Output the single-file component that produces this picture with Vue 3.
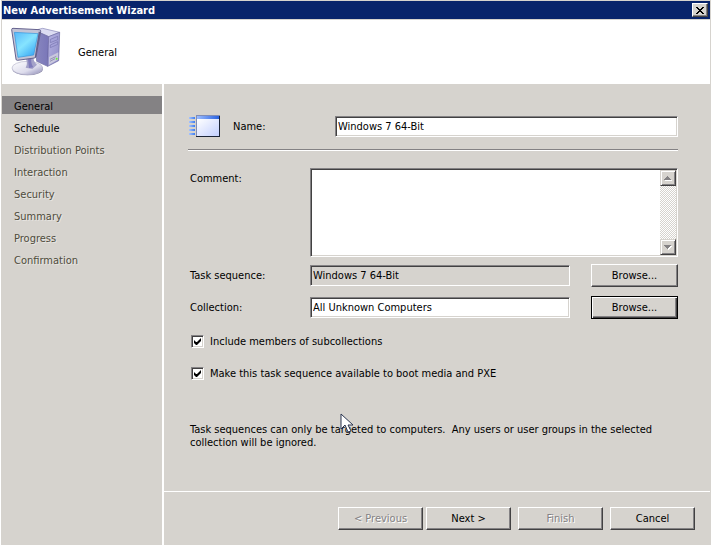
<template>
  <div class="wizard">
    <header class="title-bar">
      <h1>New Advertisement Wizard</h1>
      <button class="close" type="button" aria-label="Close">
        <svg width="8" height="7" viewBox="0 0 8 7" shape-rendering="crispEdges">
          <path d="M0 0h2v1h1v1h2V1h1V0h2v1H7v1H6v1H5v1h1v1h1v1h1v1H6V6H5V5H3v1H2v1H0V6h1V5h1V4h1V3H2V2H1V1H0z" />
        </svg>
      </button>
    </header>

    <div class="banner">
      <svg class="banner-icon" width="50" height="50" viewBox="33 87 150 150">
        <defs>
          <linearGradient id="screen" x1="0" y1="0" x2="0.8" y2="1">
            <stop offset="0" stop-color="#58b8fa" />
            <stop offset="0.5" stop-color="#86e4ff" />
            <stop offset="1" stop-color="#35a5f4" />
          </linearGradient>
          <linearGradient id="side" x1="0" y1="0" x2="1" y2="0">
            <stop offset="0" stop-color="#8a88c0" />
            <stop offset="1" stop-color="#7976b8" />
          </linearGradient>
          <linearGradient id="front" x1="0" y1="0" x2="1" y2="1">
            <stop offset="0" stop-color="#b9b6e6" />
            <stop offset="1" stop-color="#8b88c3" />
          </linearGradient>
          <linearGradient id="base" x1="0" y1="0" x2="1" y2="1">
            <stop offset="0" stop-color="#ffffff" />
            <stop offset="0.6" stop-color="#dddcec" />
            <stop offset="1" stop-color="#8886b4" />
          </linearGradient>
        </defs>
        <path d="M104 97l24-6 51 12-33 13z" fill="#dcdcf2" stroke="#8583b5" stroke-width="2" />
        <path d="M104 97l42 19-3 89-33-15z" fill="url(#side)" stroke="#6966a0" stroke-width="2" />
        <path d="M146 116l33-13-3 85-33 17z" fill="url(#front)" stroke="#6966a0" stroke-width="2" />
        <path d="M151 124l22-9v10l-22 9zM151 141l22-10v8l-22 10z" fill="#a5a2d8" stroke="#7774af" stroke-width="2" />
        <path d="M147 177l28-14-1 22-27 15z" fill="#c9c8de" />
        <path d="M150 184l19-9M150 190l15-8" stroke="#77759c" stroke-width="2" />
        <circle cx="170" cy="182" r="3" fill="#64ee32" />
        <ellipse cx="83" cy="213" rx="46" ry="19" fill="#908eae" />
        <ellipse cx="82" cy="210" rx="46" ry="20" fill="url(#base)" stroke="#b6b5cb" stroke-width="2" />
        <path d="M76 178l25-4q-2 18 10 26l-14 13-20-4q8-12-1-31z" fill="#a4a2c9" />
        <path d="M84 183l10-2q-2 17 6 27l-13 2z" fill="#7f7bbb" />
        <path d="M35 95q0-4 4-4l79 4q5 1 4 6l-14 75q-1 4-5 4l-51 7q-4 0-4-4z" fill="#c3c4d6" stroke="#66638f" stroke-width="3" />
        <path d="M122 101l-14 76-4 3 12-79z" fill="#625f8c" />
        <path d="M43 103l71 4-13 64-47 7z" fill="url(#screen)" stroke="#3295dc" stroke-width="2" />
      </svg>
      <h2>General</h2>
    </div>

    <div class="body">
      <nav class="steps">
        <ul>
          <li v-for="step in steps" :key="step.name" :class="step.state">
            <a href="#" :aria-current="step.state === 'current' ? 'step' : undefined" @click.prevent>{{ step.name }}</a>
          </li>
        </ul>
      </nav>

      <form class="main" @submit.prevent>
        <div class="page">
          <div class="name-row">
            <svg width="32" height="23" viewBox="0 0 32 23" shape-rendering="crispEdges">
              <defs>
                <linearGradient id="dash" x1="0" x2="1">
                  <stop offset="0" stop-color="#a9c5ff" />
                  <stop offset="1" stop-color="#3c7cf0" />
                </linearGradient>
                <linearGradient id="pane" x1="1" y1="1" x2="0" y2="0">
                  <stop offset="0" stop-color="#c3d0ff" />
                  <stop offset="1" stop-color="#ffffff" />
                </linearGradient>
                <linearGradient id="caption" x1="0" x2="1">
                  <stop offset="0" stop-color="#9bbcff" />
                  <stop offset="1" stop-color="#2a62e0" />
                </linearGradient>
              </defs>
              <path d="M1 2h6v2H1zM1 6h6v2H1zM1 10h6v2H1zM1 14h6v2H1zM1 18h6v2H1z" fill="url(#dash)" />
              <path d="M8 0h24v22H8z" fill="#7f8db8" />
              <path d="M31 1h1v21H8v-1h23z" fill="#1b2436" />
              <path d="M9 1h22v3H9z" fill="url(#caption)" />
              <path d="M9 4h22v17H9z" fill="url(#pane)" />
            </svg>
            <label for="name">Name:</label>
            <input id="name" v-model="name" class="field" type="text" />
          </div>

          <hr />

          <div class="fields">
            <label for="comment" class="comment-label">Comment:</label>
            <div class="comment field">
              <textarea id="comment" v-model="comment"></textarea>
              <div class="scrollbar">
                <button type="button" aria-label="Scroll up">
                  <svg width="8" height="5" viewBox="0 0 8 5" shape-rendering="crispEdges">
                    <path d="M1 4h7v1H1z" fill="#fff" />
                    <path d="M3 0h1v1h1v1h1v1h1v1H0V3h1V2h1V1h1z" fill="#848284" />
                  </svg>
                </button>
                <button type="button" aria-label="Scroll down">
                  <svg width="8" height="5" viewBox="0 0 8 5" shape-rendering="crispEdges">
                    <path d="M7 1h1v1H7v1H6v1H5v1H4V3z" fill="#fff" />
                    <path d="M0 0h7v1H6v1H5v1H4v1H3V3H2V2H1V1H0z" fill="#848284" />
                  </svg>
                </button>
              </div>
            </div>

            <label for="sequence">Task sequence:</label>
            <input id="sequence" v-model="sequence" class="field" type="text" readonly />
            <button class="button browse" type="button">Browse...</button>

            <label for="collection">Collection:</label>
            <input id="collection" v-model="collection" class="field" type="text" />
            <button class="button browse default" type="button">Browse...</button>
          </div>

          <div class="checks">
            <label>
              <input v-model="subcollections" type="checkbox" />
              Include members of subcollections
            </label>
            <label>
              <input v-model="bootMedia" type="checkbox" />
              Make this task sequence available to boot media and PXE
            </label>
          </div>

          <div class="note">
            <p>
              Task sequences can only be targeted to computers.&nbsp; Any users or user groups in the selected
              collection will be ignored.
            </p>
            <svg class="pointer" width="13" height="20" viewBox="0 0 13 20">
              <path d="M1 1v15l4-4 3 7 3-1-3-6h5z" fill="#fff" stroke="#2b3550" stroke-width="1" />
            </svg>
          </div>
        </div>

        <footer class="footer">
          <button class="button" type="button" disabled>&lt; Previous</button>
          <button class="button next" type="submit">Next &gt;</button>
          <button class="button" type="button" disabled>Finish</button>
          <button class="button" type="button">Cancel</button>
        </footer>
      </form>
    </div>
  </div>
</template>

<script setup>
import { ref } from 'vue'

const steps = [
  { name: 'General', state: 'current' },
  { name: 'Schedule', state: 'ready' },
  { name: 'Distribution Points', state: 'locked' },
  { name: 'Interaction', state: 'locked' },
  { name: 'Security', state: 'locked' },
  { name: 'Summary', state: 'locked' },
  { name: 'Progress', state: 'locked' },
  { name: 'Confirmation', state: 'locked' }
]

const name = ref('Windows 7 64-Bit')
const comment = ref('')
const sequence = ref('Windows 7 64-Bit')
const collection = ref('All Unknown Computers')
const subcollections = ref(true)
const bootMedia = ref(true)
</script>

<style>
body {
  margin: 0;
  background: #d6d3ce;
}
</style>

<style scoped>
.wizard {
  display: flex;
  flex-direction: column;
  box-sizing: border-box;
  min-height: 100vh;
  padding: 1px 1px 0 0;
  border-left: 1px solid #fff;
  background: #d6d3ce;
  color: #000;
  font-family: Tahoma, "DejaVu Sans Condensed", "DejaVu Sans", sans-serif;
  font-size: 11px;
  line-height: 13px;
}

.wizard * {
  box-sizing: border-box;
}

button,
input,
textarea {
  margin: 0;
  color: inherit;
  font: inherit;
}

.title-bar {
  display: flex;
  align-items: center;
  justify-content: space-between;
  height: 18px;
  margin-left: 1px;
  padding: 0 2px 0 1px;
  background: #08246b;
}

.title-bar h1 {
  margin: 0;
  color: #fff;
  font-size: 11px;
  font-weight: bold;
}

.close {
  display: flex;
  align-items: center;
  justify-content: center;
  width: 16px;
  height: 14px;
  padding: 0;
  border: 1px solid;
  border-color: #fff #424142 #424142 #fff;
  background: #d6d3ce;
  box-shadow: inset -1px -1px #848284;
}

.banner {
  display: flex;
  align-items: center;
  gap: 17px;
  height: 64px;
  margin: 1px 0 0 1px;
  padding-left: 9px;
  background: #fff;
}

.banner h2 {
  margin: 0;
  font-size: 11px;
  font-weight: normal;
}

.body {
  display: flex;
  flex: 1;
}

.steps {
  flex: none;
  width: 163px;
  padding: 12px 0 0 1px;
  border-right: 2px solid #fff;
}

.steps ul {
  margin: 0;
  padding: 0;
  list-style: none;
}

.steps li {
  height: 18px;
  margin-bottom: 4px;
  padding: 4px 0 0 12px;
}

.steps a {
  display: block;
  color: #000;
  text-decoration: none;
}

.steps .current {
  background: #848284;
}

.steps .locked a {
  color: #4f4c3c;
  text-shadow: 1px 1px #e8e6e2;
}

.main {
  display: flex;
  flex: 1;
  flex-direction: column;
  min-width: 0;
}

.page {
  flex: 1;
  padding: 31px 32px 0 24px;
}

.name-row {
  display: flex;
  align-items: center;
}

.name-row label {
  width: 102px;
  margin-left: 13px;
}

.name-row .field {
  flex: 1;
}

.field {
  min-width: 0;
  height: 21px;
  padding: 0 2px;
  border: 1px solid;
  border-color: #848284 #fff #fff #848284;
  border-radius: 0;
  background: #fff;
  box-shadow: inset 1px 1px #424142, inset -1px -1px #d6d3ce;
  outline: none;
}

.field[readonly] {
  background: #d6d3ce;
}

hr {
  height: 2px;
  margin: 11px 0 17px;
  border: 0;
  border-top: 1px solid #848284;
  border-bottom: 1px solid #fff;
}

.fields {
  display: grid;
  grid-template-columns: 120px 1fr 87px;
  align-items: center;
  row-gap: 9px;
  margin-left: 2px;
}

.comment {
  display: flex;
  grid-column: 2 / 4;
  height: 89px;
  margin-bottom: -2px;
  padding: 1px;
}

.comment-label {
  align-self: start;
  padding-top: 4px;
}

.comment textarea {
  flex: 1;
  padding: 1px;
  border: 0;
  background: transparent;
  outline: none;
  resize: none;
}

.fields input {
  margin-right: 21px;
}

.scrollbar {
  display: flex;
  flex-direction: column;
  justify-content: space-between;
  width: 16px;
  background: repeating-conic-gradient(#d6d3ce 0 25%, #fff 0 50%) 0 0 / 2px 2px;
}

.scrollbar button {
  display: flex;
  align-items: center;
  justify-content: center;
  height: 16px;
  padding: 0;
  border: 1px solid;
  border-color: #d6d3ce #424142 #424142 #d6d3ce;
  background: #d6d3ce;
  box-shadow: inset 1px 1px #fff, inset -1px -1px #848284;
}

.button {
  width: 85px;
  height: 23px;
  padding: 0;
  border: 1px solid;
  border-color: #fff #424142 #424142 #fff;
  border-radius: 0;
  background: #d6d3ce;
  box-shadow: inset -1px -1px #848284;
}

.button:disabled {
  color: #848284;
  text-shadow: 1px 1px #fff;
}

.browse {
  width: 87px;
}

.default {
  border-color: #000;
  box-shadow: inset 1px 1px #fff, inset -1px -1px #424142, inset -2px -2px #848284;
}

.checks {
  display: flex;
  flex-direction: column;
  align-items: flex-start;
  gap: 19px;
  margin: 16px 0 0 3px;
}

.checks label {
  display: flex;
  align-items: center;
  gap: 6px;
}

.checks input {
  display: grid;
  place-items: center;
  width: 13px;
  height: 13px;
  border: 1px solid;
  border-color: #848284 #fff #fff #848284;
  background: #fff;
  box-shadow: inset 1px 1px #424142, inset -1px -1px #d6d3ce;
  appearance: none;
}

.checks input:checked::before {
  width: 7px;
  height: 7px;
  background: #000;
  clip-path: polygon(0 2px, 0 5px, 2px 7px, 3px 7px, 7px 3px, 7px 0, 3px 4px, 2px 4px);
  content: "";
}

.note {
  position: relative;
  margin: 43px 16px 20px 2px;
}

.note p {
  margin: 0;
}

/* mouse pointer lies over the note */
.pointer {
  position: absolute;
  top: -10px;
  left: 150px;
}

.footer {
  display: flex;
  justify-content: flex-end;
  gap: 7px;
  padding: 15px 15px;
  border-top: 1px solid #fff;
}

.next {
  margin-left: -4px;
}
</style>
